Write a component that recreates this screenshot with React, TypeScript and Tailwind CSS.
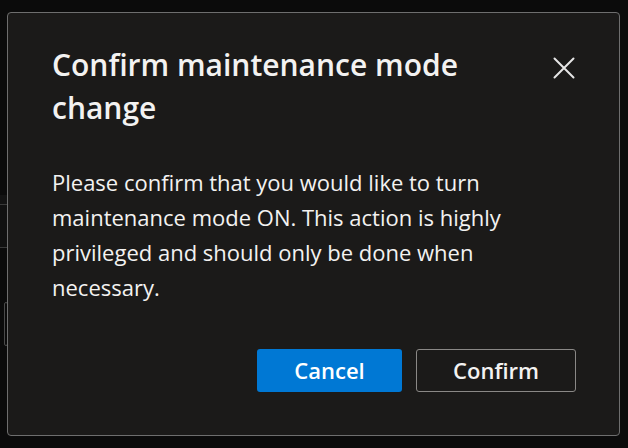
import React from "react";

const font = { fontFamily: '"Open Sans", "Noto Sans", sans-serif' };

const CloseIcon = () => (
  <svg width="22" height="22" viewBox="0 0 22 22" fill="none" stroke="#e6e6e6" strokeWidth="2" strokeLinecap="round">
    <path d="M1.5 1.5 L20.5 20.5 M20.5 1.5 L1.5 20.5" />
  </svg>
);

export default function App() {
  return (
    <div className="relative w-[628px] h-[448px] overflow-hidden bg-[#0b0b0b]" style={font}>
      {/* page behind the overlay */}
      <div className="flex flex-col w-[8px] pt-[195px]">
        <div className="h-[9px] bg-[#131313]" />
        <div className="h-[44px] border-y border-[#3a3a3a] bg-[#111111]" />
        <div className="h-[54px]" />
        <div className="ml-[4px] h-[44px] border border-[#4a4a4a] rounded-[3px]" />
      </div>

      <div className="absolute left-[7px] top-[12px] w-[613px] h-[424px] rounded-[4px] border border-[#6e6e6e] bg-[#1b1a19] flex flex-col pl-[44px] pr-[43px] pt-[30px] pb-[43px]">
        <div className="flex items-start justify-between">
          <h2 className="text-[30px] leading-[43px] font-semibold text-[#f3f2f1] w-[450px]">
            Confirm maintenance mode change
          </h2>
          <button className="mt-[14px] mr-[1px]">
            <CloseIcon />
          </button>
        </div>

        <p className="mt-[36px] text-[22px] leading-[35px] text-[#f3f2f1]">
          Please confirm that you would like to turn
          <br />
          maintenance mode ON. This action is highly
          <br />
          privileged and should only be done when
          <br />
          necessary.
        </p>

        <div className="mt-auto flex justify-end gap-[14px]">
          <button className="w-[145px] h-[43px] rounded-[3px] bg-[#0078d4] text-white text-[22px] font-semibold">
            Cancel
          </button>
          <button className="w-[160px] h-[43px] rounded-[3px] border border-[#8a8886] bg-[#1b1a19] text-[#f3f2f1] text-[22px] font-semibold">
            Confirm
          </button>
        </div>
      </div>
    </div>
  );
}
